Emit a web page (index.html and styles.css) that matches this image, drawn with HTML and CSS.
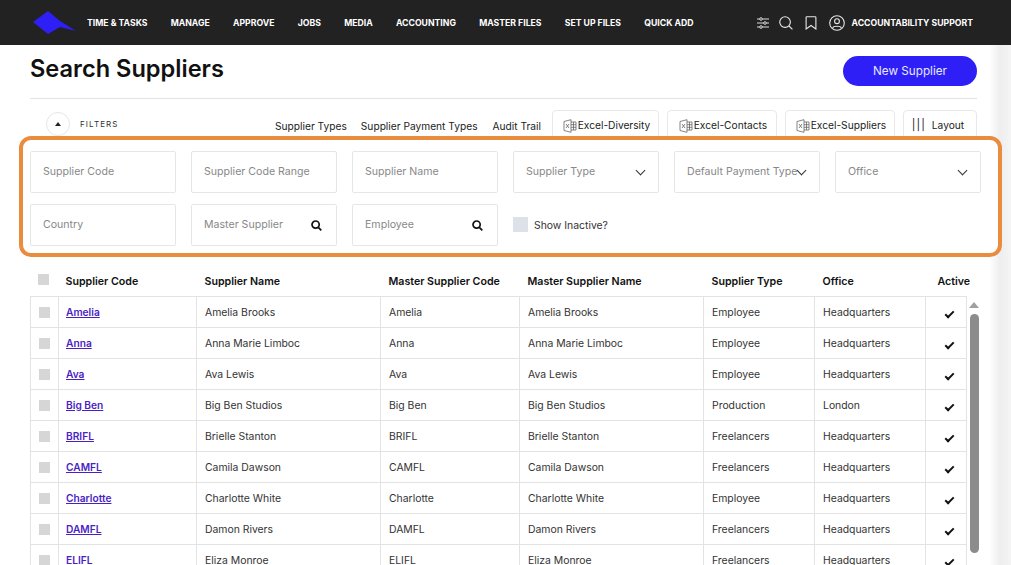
FILE: index.html
```html
<!DOCTYPE html>
<html lang="en">
<head>
    <meta charset="UTF-8">
    <meta name="viewport" content="width=device-width, initial-scale=1.0">
    <title>Search Suppliers</title>
    <link rel="stylesheet" href="styles.css">
</head>
<body>
    <header class="top-bar">
        <svg class="logo" width="44" height="24" viewBox="0 0 44 24">
            <path d="M1 12 L16 1 L28 11 L44 21 L28 17 L16 24 Z" fill="#2d1ff5"/>
        </svg>
        <nav class="main-nav">
            <a>TIME &amp; TASKS</a>
            <a>MANAGE</a>
            <a>APPROVE</a>
            <a>JOBS</a>
            <a>MEDIA</a>
            <a>ACCOUNTING</a>
            <a>MASTER FILES</a>
            <a>SET UP FILES</a>
            <a>QUICK ADD</a>
        </nav>
        <div class="top-tools">
            <svg width="12" height="12" viewBox="0 0 12 12" fill="none" stroke="#d8d8d8" stroke-width="1">
                <path d="M0 2H12M0 6H12M0 10H12"/>
                <circle cx="4" cy="2" r="1.3" fill="#222"/>
                <circle cx="8" cy="6" r="1.3" fill="#222"/>
                <circle cx="4" cy="10" r="1.3" fill="#222"/>
            </svg>
            <svg width="14" height="14" viewBox="0 0 15 15" fill="none" stroke="#e6e6e6" stroke-width="1.2">
                <circle cx="6.5" cy="6.5" r="5.7"/>
                <path d="M10.7 10.7L14.4 14.4"/>
            </svg>
            <svg class="mark-icon" width="12" height="14" viewBox="0 0 13 15" fill="none" stroke="#e6e6e6" stroke-width="1.2">
                <path d="M1.2 1.5Q1.2 .7 2 .7H11Q11.8 .7 11.8 1.5V14L6.5 10.2L1.2 14Z"/>
            </svg>
            <svg class="user-icon" width="16" height="16" viewBox="0 0 16 16" fill="none" stroke="#e6e6e6" stroke-width="1.1">
                <circle cx="8" cy="8" r="7.3"/>
                <circle cx="8" cy="6.2" r="2.4"/>
                <path d="M3.8 13C4 10.6 12 10.6 12.2 13"/>
            </svg>
            <span class="support">ACCOUNTABILITY SUPPORT</span>
        </div>
    </header>

    <main class="page">
        <div class="title-row">
            <h1>Search Suppliers</h1>
            <button class="new-button">New Supplier</button>
        </div>

        <div class="toolbar">
            <button class="collapse-button"><span class="up-arrow"></span></button>
            <span class="filters-label">FILTERS</span>
            <div class="toolbar-actions">
                <a>Supplier Types</a>
                <a class="payment-link">Supplier Payment Types</a>
                <a class="audit-link">Audit Trail</a>
                <button class="tool-button diversity">
                    <svg class="xl-icon" width="14" height="14" viewBox="0 0 14 14" fill="none" stroke="#666" stroke-width=".8"><path d="M1 2.5L8 .7V13.3L1 11.5ZM8 3H13V11H8M10.5 3V11M8 5.7H13M8 8.3H13"/><path d="M3 5L6 9M6 5L3 9"/></svg>Excel-Diversity
                </button>
                <button class="tool-button contacts">
                    <svg class="xl-icon" width="14" height="14" viewBox="0 0 14 14" fill="none" stroke="#666" stroke-width=".8"><path d="M1 2.5L8 .7V13.3L1 11.5ZM8 3H13V11H8M10.5 3V11M8 5.7H13M8 8.3H13"/><path d="M3 5L6 9M6 5L3 9"/></svg>Excel-Contacts
                </button>
                <button class="tool-button suppliers">
                    <svg class="xl-icon" width="14" height="14" viewBox="0 0 14 14" fill="none" stroke="#666" stroke-width=".8"><path d="M1 2.5L8 .7V13.3L1 11.5ZM8 3H13V11H8M10.5 3V11M8 5.7H13M8 8.3H13"/><path d="M3 5L6 9M6 5L3 9"/></svg>Excel-Suppliers
                </button>
                <button class="tool-button layout"><span class="bars">|||</span>Layout</button>
            </div>
        </div>

        <section class="filter-box">
            <div class="field">Supplier Code</div>
            <div class="field">Supplier Code Range</div>
            <div class="field">Supplier Name</div>
            <div class="field">Supplier Type<span class="chevron"></span></div>
            <div class="field">Default Payment Type<span class="chevron"></span></div>
            <div class="field">Office<span class="chevron"></span></div>
            <div class="field">Country</div>
            <div class="field">Master Supplier
                <svg class="search-icon" width="11" height="11" viewBox="0 0 11 11" fill="none" stroke="#111" stroke-width="1.7"><circle cx="4.6" cy="4.6" r="3.6"/><path d="M7.3 7.3L10.3 10.3"/></svg>
            </div>
            <div class="field">Employee
                <svg class="search-icon" width="11" height="11" viewBox="0 0 11 11" fill="none" stroke="#111" stroke-width="1.7"><circle cx="4.6" cy="4.6" r="3.6"/><path d="M7.3 7.3L10.3 10.3"/></svg>
            </div>
            <label class="inactive"><span class="check-box big"></span>Show Inactive?</label>
        </section>

        <div class="table-area">
            <table class="supplier-table">
                <colgroup>
                    <col class="c-check"><col class="c-code"><col class="c-name"><col class="c-mcode">
                    <col class="c-mname"><col class="c-type"><col class="c-office"><col class="c-active">
                </colgroup>
                <thead>
                    <tr>
                        <th class="check-cell"><span class="check-box head-box"></span></th>
                        <th>Supplier Code</th><th>Supplier Name</th><th>Master Supplier Code</th>
                        <th>Master Supplier Name</th><th>Supplier Type</th><th>Office</th><th class="active-head">Active</th>
                    </tr>
                </thead>
                <tbody>
                    <tr><td class="check-cell"><span class="check-box"></span></td><td><a>Amelia</a></td><td>Amelia Brooks</td><td>Amelia</td><td>Amelia Brooks</td><td>Employee</td><td>Headquarters</td><td class="tick"><span class="tick-mark"></span></td></tr>
                    <tr><td class="check-cell"><span class="check-box"></span></td><td><a>Anna</a></td><td>Anna Marie Limboc</td><td>Anna</td><td>Anna Marie Limboc</td><td>Employee</td><td>Headquarters</td><td class="tick"><span class="tick-mark"></span></td></tr>
                    <tr><td class="check-cell"><span class="check-box"></span></td><td><a>Ava</a></td><td>Ava Lewis</td><td>Ava</td><td>Ava Lewis</td><td>Employee</td><td>Headquarters</td><td class="tick"><span class="tick-mark"></span></td></tr>
                    <tr><td class="check-cell"><span class="check-box"></span></td><td><a>Big Ben</a></td><td>Big Ben Studios</td><td>Big Ben</td><td>Big Ben Studios</td><td>Production</td><td>London</td><td class="tick"><span class="tick-mark"></span></td></tr>
                    <tr><td class="check-cell"><span class="check-box"></span></td><td><a>BRIFL</a></td><td>Brielle Stanton</td><td>BRIFL</td><td>Brielle Stanton</td><td>Freelancers</td><td>Headquarters</td><td class="tick"><span class="tick-mark"></span></td></tr>
                    <tr><td class="check-cell"><span class="check-box"></span></td><td><a>CAMFL</a></td><td>Camila Dawson</td><td>CAMFL</td><td>Camila Dawson</td><td>Freelancers</td><td>Headquarters</td><td class="tick"><span class="tick-mark"></span></td></tr>
                    <tr><td class="check-cell"><span class="check-box"></span></td><td><a>Charlotte</a></td><td>Charlotte White</td><td>Charlotte</td><td>Charlotte White</td><td>Employee</td><td>Headquarters</td><td class="tick"><span class="tick-mark"></span></td></tr>
                    <tr><td class="check-cell"><span class="check-box"></span></td><td><a>DAMFL</a></td><td>Damon Rivers</td><td>DAMFL</td><td>Damon Rivers</td><td>Freelancers</td><td>Headquarters</td><td class="tick"><span class="tick-mark"></span></td></tr>
                    <tr><td class="check-cell"><span class="check-box"></span></td><td><a>ELIFL</a></td><td>Eliza Monroe</td><td>ELIFL</td><td>Eliza Monroe</td><td>Freelancers</td><td>Headquarters</td><td class="tick"><span class="tick-mark"></span></td></tr>
                </tbody>
            </table>
            <div class="scroll-rail">
                <span class="scroll-up"></span>
                <span class="scroll-thumb"></span>
            </div>
        </div>
    </main>
</body>
</html>
```

FILE: styles.css
```css
* {
    box-sizing: border-box;
}

html,
body {
    height: 100%;
}

body {
    margin: 0;
    overflow: hidden;
    background-color: #ffffff;
    color: #222222;
    font-family: Inter, "Open Sans", sans-serif;
    font-size: 11px;
}

button {
    font-family: inherit;
}

/* top bar */
.top-bar {
    height: 45px;
    background-color: #222222;
    display: flex;
    align-items: center;
    padding: 0 38px 0 32px;
    color: #ffffff;
}

.logo {
    flex-shrink: 0;
    margin-top: -1px;
}

.main-nav {
    display: flex;
    gap: 23.2px;
    margin: 1px 0 0 11px;
    font-size: 8.7px;
    font-weight: 700;
    white-space: nowrap;
}

.top-tools {
    margin-left: auto;
    display: flex;
    align-items: center;
    gap: 10px;
}

.mark-icon {
    margin-left: 2px;
}

.user-icon {
    margin-left: 2px;
}

.support {
    font-size: 8.7px;
    font-weight: 700;
    margin: 1px 0 0 -3px;
    white-space: nowrap;
}

/* page */
.page {
    min-height: 520px;
    padding: 0 34px 0 30px;
    background: linear-gradient(to right, #ffffff 989px, #eeeeee 1000px, #f4f4f4 1011px);
}

.title-row {
    height: 54px;
    display: flex;
    align-items: flex-start;
    justify-content: space-between;
    border-bottom: 1px solid #e3e3e3;
}

h1 {
    margin: 9px 0 0;
    font-size: 23.6px;
    line-height: 30px;
    font-weight: 600;
    color: #111111;
}

.new-button {
    margin-top: 11px;
    width: 134px;
    height: 30px;
    border: none;
    border-radius: 15px;
    background-color: #2d1ff5;
    color: #e8e8ff;
    font-size: 11.7px;
}

.toolbar {
    height: 26px;
    margin-top: 11px;
    padding-left: 16px;
    display: flex;
    overflow: hidden;
}

.collapse-button {
    width: 24px;
    height: 24px;
    margin-top: 2px;
    padding: 0;
    border: 1px solid #e6e6e6;
    border-radius: 50%;
    background-color: #ffffff;
    display: flex;
    align-items: center;
    justify-content: center;
}

.up-arrow {
    border-left: 3px solid transparent;
    border-right: 3px solid transparent;
    border-bottom: 4px solid #222222;
}

.filters-label {
    margin: 9px 0 0 10px;
    font-size: 8px;
    letter-spacing: 1.1px;
    color: #333333;
}

.toolbar-actions {
    margin-left: auto;
    display: flex;
    align-items: flex-start;
    font-size: 10.2px;
    white-space: nowrap;
}

.toolbar-actions a {
    margin: 10px 14px 0 0;
}

.toolbar-actions .payment-link {
    margin-right: 15px;
}

.tool-button {
    height: 40px;
    padding: 0 0 11px 2px;
    border: 1px solid #e8e8e8;
    border-radius: 4px;
    background-color: #ffffff;
    color: #222222;
    font-size: 10.2px;
    display: flex;
    align-items: center;
    justify-content: center;
    margin-left: 8px;
}

.tool-button.diversity {
    width: 107px;
    margin-left: -3px;
}

.tool-button.contacts {
    width: 110px;
}

.tool-button.suppliers {
    width: 110px;
}

.tool-button.layout {
    width: 74px;
    padding: 0 4px 11px 0;
}

.xl-icon {
    margin-right: 1px;
    margin-top: 2px;
}

.bars {
    margin-right: 6px;
    font-size: 11px;
    letter-spacing: 1px;
}

/* filter box */
.filter-box {
    position: relative;
    width: 983px;
    height: 121px;
    margin-left: -11px;
    padding: 11px 7px;
    border: 4px solid #e98c3e;
    border-radius: 12px;
    background-color: #ffffff;
    display: grid;
    grid-template-columns: repeat(6, 146px);
    grid-auto-rows: 42px;
    column-gap: 15px;
    row-gap: 11px;
}

.field {
    border: 1px solid #e6e6e6;
    border-radius: 2px;
    padding: 0 13px 2px 12px;
    display: flex;
    align-items: center;
    justify-content: space-between;
    color: #888888;
    font-size: 10.6px;
    white-space: nowrap;
}

.chevron {
    width: 7px;
    height: 7px;
    margin: -2px 1px 0 0;
    border-right: 1.2px solid #333333;
    border-bottom: 1.2px solid #333333;
    transform: rotate(45deg);
    flex-shrink: 0;
}

.search-icon {
    flex-shrink: 0;
    margin: 2px 1px 0 0;
}

.inactive {
    display: flex;
    align-items: center;
    gap: 6px;
    color: #333333;
    font-size: 10.4px;
    white-space: nowrap;
}

.check-box {
    display: inline-block;
    width: 11px;
    height: 11px;
    background-color: #d6d6d6;
    vertical-align: middle;
}

.check-box.head-box {
    margin: -2px 0 0 -2px;
}

.check-box.big {
    width: 15px;
    height: 15px;
    margin-top: -2px;
    background-color: #dde2ea;
}

/* table */
.table-area {
    display: flex;
    margin-top: 8px;
}

.supplier-table {
    width: 936px;
    table-layout: fixed;
    border-collapse: collapse;
    font-size: 10.4px;
}

.c-check { width: 28px; }
.c-code { width: 138px; }
.c-name { width: 184px; }
.c-mcode { width: 139px; }
.c-mname { width: 184px; }
.c-type { width: 111px; }
.c-office { width: 111px; }
.c-active { width: 41px; }

.supplier-table th {
    height: 31px;
    padding: 2px 8px 0;
    text-align: left;
    font-size: 10.65px;
    font-weight: 600;
    color: #111111;
    white-space: nowrap;
    border-bottom: 1px solid #e3e3e3;
}

.supplier-table td {
    height: 31px;
    padding: 2px 8px 0;
    color: #333333;
    white-space: nowrap;
    border: 1px solid #e3e3e3;
}

.supplier-table th:nth-child(2),
.supplier-table td:nth-child(2) {
    padding-left: 7px;
}

.supplier-table th.check-cell,
.supplier-table td.check-cell {
    padding: 0;
    text-align: center;
}

.supplier-table td a {
    color: #4a1fc4;
    font-size: 10.2px;
    font-weight: 600;
    text-decoration: underline;
}

.supplier-table th.active-head {
    padding-left: 12px;
}

.supplier-table td.tick {
    padding: 2px 0 0 7px;
    text-align: center;
}

.tick-mark {
    display: inline-block;
    width: 9px;
    height: 5px;
    border-left: 2.2px solid #111111;
    border-bottom: 2.2px solid #111111;
    transform: rotate(-45deg);
}

.scroll-rail {
    width: 12px;
    margin: 37px 0 0 2px;
    display: flex;
    flex-direction: column;
    align-items: center;
    gap: 6px;
}

.scroll-up {
    border-left: 5px solid transparent;
    border-right: 5px solid transparent;
    border-bottom: 6px solid #a0a0a0;
}

.scroll-thumb {
    width: 9px;
    height: 239px;
    flex-shrink: 0;
    border-radius: 5px;
    background-color: #8c8c8c;
}
```
